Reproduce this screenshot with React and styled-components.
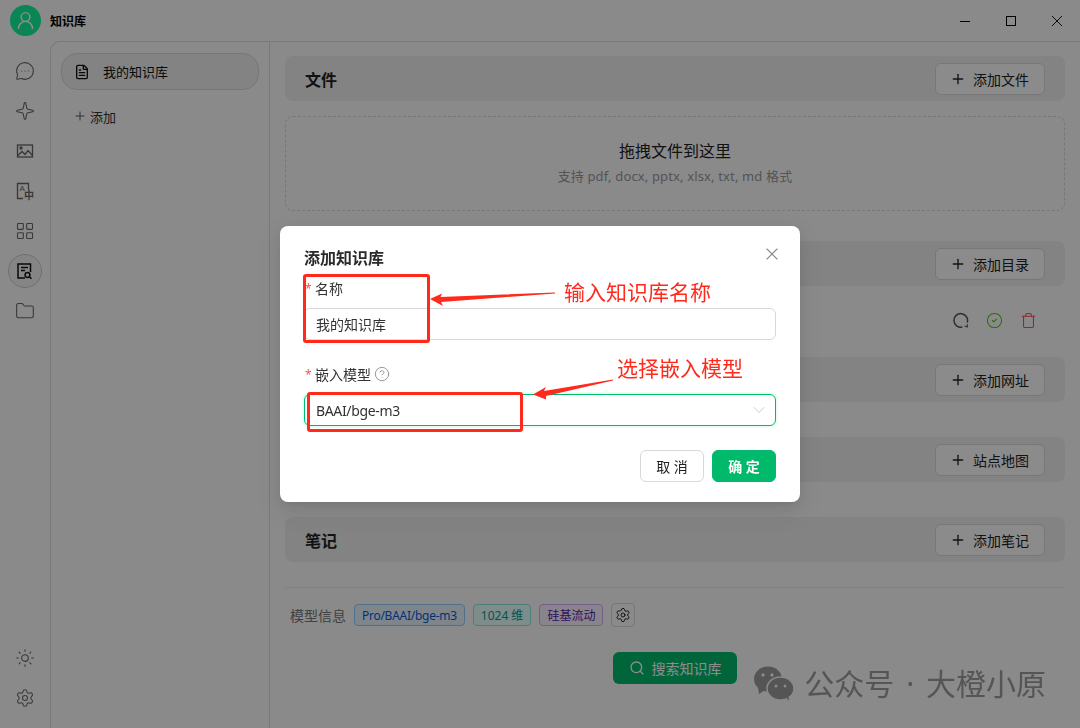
import React from 'react'
import styled, { createGlobalStyle } from 'styled-components'
import { ChevronDown, CircleCheck, CircleHelp, FileText, Folder, LayoutGrid, MessageCircleMore, Plus, Search, Settings, Sparkle, Sun, Trash, UserRound, X } from 'lucide-react'

const GlobalStyle = createGlobalStyle`
    * {
        box-sizing: border-box;
    }
    html, body {
        margin: 0;
        padding: 0;
        height: 100%;
        overflow: hidden;
    }
    body {
        background: #fbfbfb;
        color: #222;
        font-family: 'Noto Sans', 'Noto Sans CJK SC', sans-serif;
        font-size: 14px;
    }
`
const Shell = styled.div`
    display: flex;
    flex-direction: column;
    width: 1080px;
    height: 728px;
`
const TitleBar = styled.header`
    flex: 0 0 41px;
    display: flex;
    align-items: center;
    padding-left: 10px;
`
const Avatar = styled.div`
    display: flex;
    align-items: center;
    justify-content: center;
    width: 31px;
    height: 31px;
    border-radius: 50%;
    background: #12f59a;
    color: #fff;
`
const AppTitle = styled.h1`
    margin: 0 0 0 9px;
    font-size: 12px;
    font-weight: 600;
    color: #000;
    flex: 1;
`
const WindowControl = styled.div`
    display: flex;
    align-items: center;
    justify-content: center;
    width: 46px;
    height: 40px;
    color: #000;
`
const Body = styled.div`
    flex: 1;
    display: flex;
    min-height: 0;
`
const Rail = styled.nav`
    flex: 0 0 50px;
    display: flex;
    flex-direction: column;
    align-items: center;
    gap: 6px;
    padding: 13px 0 13px;
`
const RailItem = styled.div`
    display: flex;
    align-items: center;
    justify-content: center;
    width: 34px;
    height: 34px;
    border-radius: 50%;
    color: ${p => (p.$active ? '#111' : '#666')};
    border: 1px solid ${p => (p.$active ? '#ccc' : 'transparent')};
    background: ${p => (p.$active ? '#f3f3f3' : 'transparent')};
`
const RailSpacer = styled.div`
    flex: 1;
`
const Sidebar = styled.aside`
    flex: 0 0 220px;
    padding: 11px 10px;
    border-top: 1px solid #dcdcdc;
    border-left: 1px solid #dcdcdc;
    border-right: 1px solid #dcdcdc;
    border-top-left-radius: 10px;
`
const BaseItem = styled.div`
    display: flex;
    align-items: center;
    height: 37px;
    padding: 0 14px 0 12px;
    gap: 13px;
    border: 1px solid #d8d8d8;
    border-radius: 16px;
    background: #efefef;
    font-size: 13px;
    color: #111;
`
const AddBase = styled.div`
    display: flex;
    align-items: center;
    gap: 3px;
    margin: 16px 0 0 12px;
    height: 20px;
    font-size: 13px;
    color: #333;
`
const Main = styled.main`
    flex: 1;
    display: flex;
    flex-direction: column;
    padding: 14px 15px 0;
    border-top: 1px solid #dcdcdc;
`
const Section = styled.section`
    display: flex;
    flex-direction: column;
    gap: 15px;
    margin-bottom: ${p => p.$after || 35}px;
`
const SectionHead = styled.div`
    display: flex;
    align-items: center;
    justify-content: space-between;
    height: 45px;
    padding: 0 20px;
    border-radius: 8px;
    background: #eeeeee;
`
const SectionTitle = styled.h2`
    margin: 0;
    font-size: 16px;
    font-weight: 600;
    color: #222;
`
const AddButton = styled.button`
    display: flex;
    align-items: center;
    gap: 7px;
    height: 32px;
    width: 110px;
    padding: 0 14px;
    border: 1px solid #d9d9d9;
    border-radius: 6px;
    background: #fdfdfd;
    color: #222;
    font: inherit;
    font-size: 14px;
    white-space: nowrap;
`
const DropZone = styled.div`
    display: flex;
    flex-direction: column;
    align-items: center;
    justify-content: center;
    gap: 5px;
    height: 95px;
    padding-bottom: 2px;
    border: 1px dashed #d9d9d9;
    border-radius: 8px;
    background: #fbfbfb;
`
const DropTitle = styled.div`
    font-size: 16px;
    line-height: 22px;
    color: #222;
`
const DropHint = styled.div`
    font-size: 13px;
    line-height: 18px;
    letter-spacing: 0.14px;
    color: #999;
`
const ItemRow = styled.div`
    display: flex;
    align-items: center;
    justify-content: flex-end;
    gap: 17px;
    height: 38px;
    padding-right: 28px;
`
const Spinner = styled.svg`
    width: 17px;
    height: 17px;
    color: #555;
`
const Divider = styled.hr`
    width: 100%;
    height: 1px;
    margin: -10px 0 15px;
    border: 0;
    background: #e8e8e8;
`
const ModelRow = styled.div`
    display: flex;
    align-items: center;
    gap: 8px;
    height: 24px;
    padding-left: 5px;
`
const ModelLabel = styled.span`
    font-size: 14px;
    color: #777;
`
const Tag = styled.span`
    display: flex;
    align-items: center;
    height: 22px;
    padding: 0 7px;
    border: 1px solid ${p => p.$border};
    border-radius: 4px;
    background: ${p => p.$bg};
    color: ${p => p.$color};
    font-size: 12px;
    letter-spacing: ${p => (p.$tight ? '-0.27px' : '0')};
`
const GearButton = styled.div`
    display: flex;
    align-items: center;
    justify-content: center;
    width: 24px;
    height: 24px;
    border: 1px solid #d9d9d9;
    border-radius: 4px;
    color: #222;
`
const SearchRow = styled.div`
    display: flex;
    justify-content: center;
    margin-top: 25px;
`
const SearchButton = styled.button`
    display: flex;
    align-items: center;
    justify-content: center;
    gap: 7px;
    width: 124px;
    height: 32px;
    border: 0;
    border-radius: 6px;
    background: #00b96b;
    color: #fff;
    font: inherit;
    font-size: 14px;
`
const Overlay = styled.div`
    position: fixed;
    inset: 0;
    display: flex;
    align-items: center;
    justify-content: center;
    background: rgba(0, 0, 0, 0.45);
`
const Dialog = styled.div`
    position: relative;
    display: flex;
    flex-direction: column;
    width: 520px;
    padding: 20px 24px;
    border-radius: 8px;
    background: #fff;
    box-shadow: 0 6px 16px rgba(0, 0, 0, 0.08), 0 3px 6px -4px rgba(0, 0, 0, 0.12), 0 9px 28px 8px rgba(0, 0, 0, 0.05);
`
const DialogTitle = styled.h3`
    margin: 0 0 8px;
    font-size: 16px;
    line-height: 24px;
    font-weight: 600;
    color: #2a2a2a;
`
const CloseButton = styled.div`
    position: absolute;
    top: 18px;
    right: 18px;
    width: 20px;
    height: 20px;
    color: #888;
`
const FieldLabel = styled.label`
    display: flex;
    align-items: center;
    height: 22px;
    margin-bottom: 8px;
    padding-bottom: 2px;
    font-size: 14px;
    color: #333;
    gap: 3px;
`
const Star = styled.span`
    width: 7px;
    color: #ff4d4f;
    font-size: 12px;
    margin-left: 1px;
`
const Field = styled.div`
    display: flex;
    align-items: center;
    justify-content: space-between;
    height: 32px;
    padding: 0 ${p => (p.$focus ? 6 : 11)}px 0 11px;
    margin-bottom: 24px;
    border: 1px solid ${p => (p.$focus ? '#00b96b' : '#d9d9d9')};
    border-radius: 6px;
    box-shadow: ${p => (p.$focus ? '0 0 0 2px rgba(5, 255, 120, 0.1)' : 'none')};
    font-size: 14px;
    letter-spacing: ${p => (p.$focus ? '-0.35px' : '0')};
    color: #333;
`
const Footer = styled.div`
    display: flex;
    justify-content: flex-end;
    gap: 8px;
`
const FooterButton = styled.button`
    width: 64px;
    height: 32px;
    padding: 0;
    border: 1px solid ${p => (p.$primary ? '#00b96b' : '#d9d9d9')};
    border-radius: 6px;
    background: ${p => (p.$primary ? '#00b96b' : '#fff')};
    color: ${p => (p.$primary ? '#fff' : '#222')};
    font: inherit;
    font-size: 14px;
    font-weight: ${p => (p.$primary ? 600 : 400)};
`
const NoteBox = styled.div`
    position: absolute;
    left: ${p => p.$x}px;
    top: ${p => p.$y}px;
    width: ${p => p.$w}px;
    height: ${p => p.$h}px;
    border: 3px solid #ff2a1c;
    border-radius: 3px;
`
const NoteText = styled.div`
    position: absolute;
    left: ${p => p.$x}px;
    top: ${p => p.$y}px;
    font-size: 21px;
    line-height: 28px;
    white-space: nowrap;
    color: #ff2a1c;
`
const NoteArrows = styled.svg`
    position: absolute;
    left: 0;
    top: 0;
    width: 1080px;
    height: 728px;
    pointer-events: none;
`
const Watermark = styled.div`
    position: fixed;
    right: 34px;
    top: 664px;
    display: flex;
    align-items: center;
    gap: 10px;
    font-size: 30px;
    line-height: 40px;
    word-spacing: 4px;
    color: #555;
`

const MinimizeIcon = () => (
    <svg width="12" height="12" viewBox="0 0 12 12" fill="none" stroke="currentColor">
        <path d="M1 6.5h10" />
    </svg>
)
const MaximizeIcon = () => (
    <svg width="12" height="12" viewBox="0 0 12 12" fill="none" stroke="currentColor">
        <rect x="1.5" y="1.5" width="9" height="9" />
    </svg>
)
const CloseIcon = () => (
    <svg width="12" height="12" viewBox="0 0 12 12" fill="none" stroke="currentColor" strokeWidth="0.9">
        <path d="M1 1l10 10M11 1L1 11" />
    </svg>
)
const ImageIcon = () => (
    <svg width="20" height="20" viewBox="0 0 20 20" fill="none" stroke="currentColor" strokeWidth="1.3">
        <rect x="2.5" y="4" width="15" height="12" />
        <circle cx="6" cy="7" r="1" fill="currentColor" />
        <path d="M3 14.5l4-4 3 3 3-4 4.5 5" />
    </svg>
)
const TranslateIcon = () => (
    <svg width="20" height="20" viewBox="0 0 20 20" fill="none" stroke="currentColor" strokeWidth="1.3">
        <path d="M13.5 9V2.5H2.5v15H8" />
        <text x="4.5" y="10" fontSize="8" fill="currentColor" stroke="none" fontFamily="Liberation Sans, sans-serif">A</text>
        <text x="9" y="17.5" fontSize="10" fontWeight="700" fill="currentColor" stroke="none" fontFamily="Noto Sans CJK SC, sans-serif">中</text>
    </svg>
)
const KnowledgeIcon = () => (
    <svg width="20" height="20" viewBox="0 0 20 20" fill="none" stroke="currentColor" strokeWidth="1.5">
        <path d="M10 17H3V3h12.5v8" />
        <path d="M6 6.5h7M6 9.5h4" />
        <circle cx="12.5" cy="14" r="2.4" />
        <path d="M14.3 15.8l2.2 2" />
    </svg>
)
const SpinIcon = () => (
    <Spinner viewBox="0 0 17 17" fill="none" stroke="currentColor" strokeWidth="1.5">
        <path d="M10.3 15A6.8 6.8 0 1 1 15.2 10.5" />
        <path d="M12.6 14l2.6.9.3-2.6" strokeWidth="1.1" />
    </Spinner>
)
const WechatIcon = () => (
    <svg width="41" height="36" viewBox="0 0 41 36">
        <ellipse cx="15" cy="13" rx="14" ry="12.5" fill="#555" />
        <path d="M5 21l1 7 6-4z" fill="#555" />
        <ellipse cx="27.5" cy="22.5" rx="13.5" ry="11.5" fill="#555" stroke="#8a8a8a" strokeWidth="1.5" />
        <path d="M33 31l3 4-1-7z" fill="#555" />
        <circle cx="10" cy="9" r="1.7" fill="#8a8a8a" />
        <circle cx="19" cy="9" r="1.7" fill="#8a8a8a" />
        <circle cx="23" cy="20" r="1.5" fill="#8a8a8a" />
        <circle cx="32" cy="20" r="1.5" fill="#8a8a8a" />
    </svg>
)

const railItems = [
    { key: 'chat', icon: <MessageCircleMore size={20} strokeWidth={1.3} /> },
    { key: 'agent', icon: <Sparkle size={20} strokeWidth={1.3} /> },
    { key: 'image', icon: <ImageIcon /> },
    { key: 'translate', icon: <TranslateIcon /> },
    { key: 'apps', icon: <LayoutGrid size={20} strokeWidth={1.3} /> },
    { key: 'knowledge', icon: <KnowledgeIcon />, active: true },
    { key: 'files', icon: <Folder size={20} strokeWidth={1.3} /> },
]

const AddAction = ({ children }) => (
    <AddButton>
        <Plus size={16} />
        {children}
    </AddButton>
)

const App = () => (
    <>
        <GlobalStyle />
        <Shell>
            <TitleBar>
                <Avatar><UserRound size={21} strokeWidth={1.7} /></Avatar>
                <AppTitle>知识库</AppTitle>
                <WindowControl><MinimizeIcon /></WindowControl>
                <WindowControl><MaximizeIcon /></WindowControl>
                <WindowControl><CloseIcon /></WindowControl>
            </TitleBar>
            <Body>
                <Rail>
                    {railItems.map(item => (
                        <RailItem key={item.key} $active={item.active}>{item.icon}</RailItem>
                    ))}
                    <RailSpacer />
                    <RailItem><Sun size={20} strokeWidth={1.3} /></RailItem>
                    <RailItem><Settings size={20} strokeWidth={1.3} /></RailItem>
                </Rail>
                <Sidebar>
                    <BaseItem><FileText size={16} color="#111" />我的知识库</BaseItem>
                    <AddBase><Plus size={14} strokeWidth={1.3} />添加</AddBase>
                </Sidebar>
                <Main>
                    <Section $after={30}>
                        <SectionHead>
                            <SectionTitle>文件</SectionTitle>
                            <AddAction>添加文件</AddAction>
                        </SectionHead>
                        <DropZone>
                            <DropTitle>拖拽文件到这里</DropTitle>
                            <DropHint>支持 pdf, docx, pptx, xlsx, txt, md 格式</DropHint>
                        </DropZone>
                    </Section>
                    <Section $after={18}>
                        <SectionHead>
                            <SectionTitle>目录</SectionTitle>
                            <AddAction>添加目录</AddAction>
                        </SectionHead>
                        <ItemRow>
                            <SpinIcon />
                            <CircleCheck size={17} color="#52c41a" strokeWidth={1.5} />
                            <Trash size={17} color="#ff4d4f" strokeWidth={1.5} />
                        </ItemRow>
                    </Section>
                    <Section>
                        <SectionHead>
                            <SectionTitle>网址</SectionTitle>
                            <AddAction>添加网址</AddAction>
                        </SectionHead>
                    </Section>
                    <Section>
                        <SectionHead>
                            <SectionTitle>站点地图</SectionTitle>
                            <AddAction>站点地图</AddAction>
                        </SectionHead>
                    </Section>
                    <Section>
                        <SectionHead>
                            <SectionTitle>笔记</SectionTitle>
                            <AddAction>添加笔记</AddAction>
                        </SectionHead>
                    </Section>
                    <Divider />
                    <ModelRow>
                        <ModelLabel>模型信息</ModelLabel>
                        <Tag $tight $bg="#e6f4ff" $border="#91caff" $color="#0958d9">Pro/BAAI/bge-m3</Tag>
                        <Tag $bg="#e6fffb" $border="#87e8de" $color="#08979c">1024 维</Tag>
                        <Tag $bg="#f9f0ff" $border="#d3adf7" $color="#531dab">硅基流动</Tag>
                        <GearButton><Settings size={16} strokeWidth={1.5} /></GearButton>
                    </ModelRow>
                    <SearchRow>
                        <SearchButton><Search size={16} />搜索知识库</SearchButton>
                    </SearchRow>
                </Main>
            </Body>
        </Shell>
        <Overlay>
            <Dialog>
                <CloseButton><X size={20} strokeWidth={1.3} /></CloseButton>
                <DialogTitle>添加知识库</DialogTitle>
                <FieldLabel><Star>*</Star>名称</FieldLabel>
                <Field>我的知识库</Field>
                <FieldLabel><Star>*</Star>嵌入模型<CircleHelp size={16} color="#888" strokeWidth={1.3} /></FieldLabel>
                <Field $focus>BAAI/bge-m3<ChevronDown size={20} color="#c0c0c0" strokeWidth={1} /></Field>
                <Footer>
                    <FooterButton>取 消</FooterButton>
                    <FooterButton $primary>确 定</FooterButton>
                </Footer>
            </Dialog>
        </Overlay>
        <NoteBox $x={303} $y={274} $w={127} $h={69} />
        <NoteBox $x={307} $y={392} $w={216} $h={40} />
        <NoteArrows viewBox="0 0 1080 728">
            <polygon fill="#ff2a1c" points="430,299 442,293.5 440.5,297 555,292.5 555,293.5 441,302 443,306" />
            <polygon fill="#ff2a1c" points="533,394.5 546,387 544,391 613,379.5 613,380.5 546,396 546,399.5" />
        </NoteArrows>
        <NoteText $x={564} $y={278}>输入知识库名称</NoteText>
        <NoteText $x={617} $y={354}>选择嵌入模型</NoteText>
        <Watermark><WechatIcon />公众号 · 大橙小原</Watermark>
    </>
)

export default App
